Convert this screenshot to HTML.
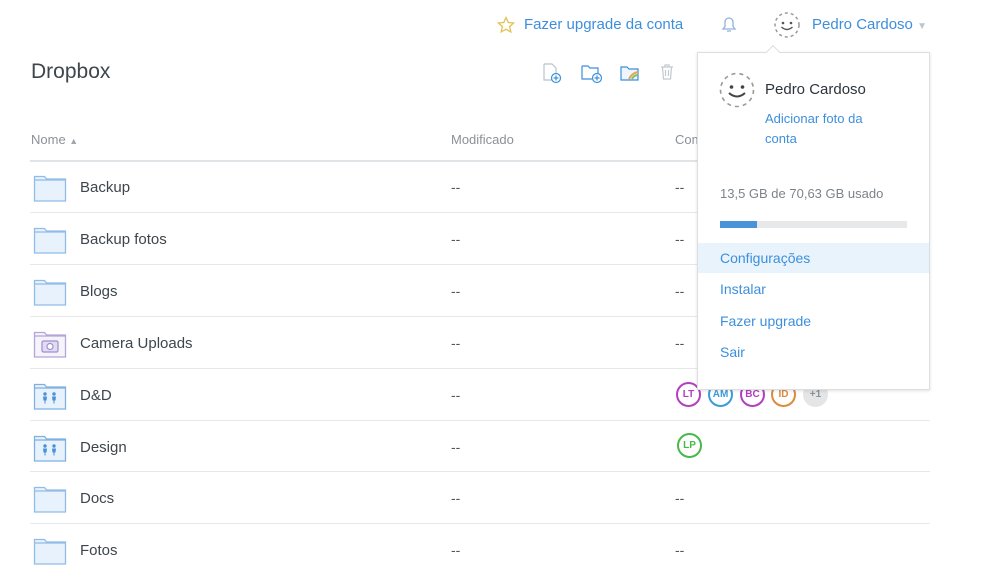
<!DOCTYPE html>
<html><head><meta charset="utf-8"><style>
*{margin:0;padding:0;box-sizing:border-box}
body{width:984px;height:572px;overflow:hidden;background:#fff;font-family:"Liberation Sans","DejaVu Sans",sans-serif;color:#3d464d;position:relative}
.a{position:absolute}
.blue{color:#3d8fdc}
.row{position:absolute;left:30px;width:900px;height:52px;border-top:1px solid #e6e8ea}
.row .ic{position:absolute;left:3px;top:10px}
.row .nm{position:absolute;left:50px;top:18px;font-size:15px;color:#3d464d}
.row .d1{position:absolute;left:421px;top:18px;font-size:14px;color:#4f575d}
.row .d2{position:absolute;left:645px;top:18px;font-size:14px;color:#4f575d}
.av{position:absolute;width:25px;height:25px;border:2px solid;border-radius:50%;font-size:10px;font-weight:bold;text-align:center;line-height:21px;background:#fff}
.menu{position:absolute;left:697px;top:52px;width:233px;height:338px;background:#fff;border:1px solid #dcdfe2;box-shadow:0 1px 3px rgba(0,0,0,.12)}
.mi{position:absolute;left:0;width:231px;height:30px;padding-left:22px;line-height:30px;font-size:14px;color:#3d8fdc}
</style></head><body>
<svg class="a" style="left:497px;top:16px" width="18" height="18" viewBox="0 0 18 18"><path d="M9 1.5l2.3 5 5.3.5-4 3.6 1.2 5.3L9 13.2 4.2 15.9l1.2-5.3-4-3.6 5.3-.5z" fill="none" stroke="#e1c24f" stroke-width="1.3"/></svg>
<div class="a blue" style="left:524px;top:16px;font-size:15px">Fazer upgrade da conta</div>
<svg class="a" style="left:719px;top:14px" width="20" height="20" viewBox="0 0 20 20"><path d="M4 15h12l-2-2.5V8a4 4 0 0 0-8 0v4.5z M8 17h4" fill="none" stroke="#8fb4d9" stroke-width="1.3"/></svg>
<svg class="a" style="left:773px;top:11px" width="28" height="28" viewBox="0 0 28 28"><circle cx="14" cy="14" r="12" fill="none" stroke="#999" stroke-width="1.5" stroke-dasharray="3 3"/><circle cx="10" cy="12" r="1.3" fill="#555"/><circle cx="18" cy="12" r="1.3" fill="#555"/><path d="M8.5 16q5.5 5 11 0" fill="none" stroke="#555" stroke-width="1.5"/></svg>
<div class="a blue" style="left:812px;top:16px;font-size:15px">Pedro Cardoso <span style="color:#b9c6d3;font-size:10px">▼</span></div>
<div class="a" style="left:31px;top:60px;font-size:21px;color:#3d464d">Dropbox</div>
<svg class="a" style="left:541px;top:62px" width="22" height="22" viewBox="0 0 22 22"><path d="M3 2h8l4 4v5M3 2v16h8" fill="none" stroke="#b8c4ce" stroke-width="1.2"/><circle cx="15" cy="16" r="4.5" fill="#fff" stroke="#3d8fdc" stroke-width="1.2"/><path d="M15 13.5v5M12.5 16h5" stroke="#3d8fdc" stroke-width="1.2"/></svg>
<svg class="a" style="left:580px;top:62px" width="24" height="22" viewBox="0 0 24 22"><path d="M2 4h6l2 2h8v5M2 4v13h10" fill="none" stroke="#3d8fdc" stroke-width="1.2"/><circle cx="17" cy="16" r="4.5" fill="#fff" stroke="#3d8fdc" stroke-width="1.2"/><path d="M17 13.5v5M14.5 16h5" stroke="#3d8fdc" stroke-width="1.2"/></svg>
<svg class="a" style="left:619px;top:62px" width="22" height="22" viewBox="0 0 22 22"><path d="M2 5h6l2 2h9v11H2z" fill="#eef5fc" stroke="#3d8fdc" stroke-width="1.2"/><path d="M10 17q3-6 9-7" fill="none" stroke="#e6a44a" stroke-width="2"/><path d="M13 17q2-4 6-4" fill="none" stroke="#7cc26a" stroke-width="2"/></svg>
<svg class="a" style="left:659px;top:63px" width="16" height="18" viewBox="0 0 16 18"><path d="M2 4h12M6 4V2h4v2M3.5 4l1 12h7l1-12M6.5 7v6M9.5 7v6" fill="none" stroke="#c2c9cf" stroke-width="1.2"/></svg>
<div class="a" style="left:31px;top:132px;font-size:13px;color:#8a9299">Nome <span style="font-size:9px;color:#a0a8ae">▲</span></div>
<div class="a" style="left:451px;top:132px;font-size:13px;color:#8a9299">Modificado</div>
<div class="a" style="left:675px;top:132px;font-size:13px;color:#8a9299">Compartilhado</div>
<div class="a" style="left:30px;top:160px;width:900px;height:2px;background:#e1e4e7"></div>
<div class="row" style="top:161px;border-top:0"><svg class="ic" width="34" height="32" viewBox="0 0 34 32"><path d="M1.5 5.5h10l2 2.5h19v22h-31z" fill="#e8f2fc" stroke="#90bce6" stroke-width="1.3"/><path d="M1.5 9h31" stroke="#90bce6" stroke-width="1.3"/></svg><div class="nm">Backup</div><div class="d1">--</div><div class="d2">--</div></div>
<div class="row" style="top:212px"><svg class="ic" width="34" height="32" viewBox="0 0 34 32"><path d="M1.5 5.5h10l2 2.5h19v22h-31z" fill="#e8f2fc" stroke="#90bce6" stroke-width="1.3"/><path d="M1.5 9h31" stroke="#90bce6" stroke-width="1.3"/></svg><div class="nm">Backup fotos</div><div class="d1">--</div><div class="d2">--</div></div>
<div class="row" style="top:264px"><svg class="ic" width="34" height="32" viewBox="0 0 34 32"><path d="M1.5 5.5h10l2 2.5h19v22h-31z" fill="#e8f2fc" stroke="#90bce6" stroke-width="1.3"/><path d="M1.5 9h31" stroke="#90bce6" stroke-width="1.3"/></svg><div class="nm">Blogs</div><div class="d1">--</div><div class="d2">--</div></div>
<div class="row" style="top:316px"><svg class="ic" width="34" height="32" viewBox="0 0 34 32"><path d="M1.5 5.5h10l2 2.5h19v22h-31z" fill="#f6f3fb" stroke="#b3a6d6" stroke-width="1.3"/><path d="M1.5 9h31" stroke="#b3a6d6" stroke-width="1.3"/><rect x="9" y="14" width="16" height="11" rx="1.5" fill="#e2dbf2" stroke="#9f8fcf" stroke-width="1.2"/><circle cx="17" cy="19.5" r="3" fill="#fff" stroke="#9f8fcf" stroke-width="1.2"/></svg><div class="nm">Camera Uploads</div><div class="d1">--</div><div class="d2">--</div></div>
<div class="row" style="top:368px"><svg class="ic" width="34" height="32" viewBox="0 0 34 32"><path d="M1.5 5.5h10l2 2.5h19v22h-31z" fill="#e8f2fc" stroke="#7fb0e0" stroke-width="1.3"/><path d="M1.5 9h31" stroke="#7fb0e0" stroke-width="1.3"/><g fill="#4a90d9"><circle cx="12" cy="15" r="1.7"/><path d="M10 17.5h4l-.5 4h-1v3h-1v-3h-1z"/><circle cx="21" cy="15" r="1.7"/><path d="M19 17.5h4l-.5 4h-1v3h-1v-3h-1z"/></g></svg><div class="nm">D&amp;D</div><div class="d1">--</div></div>
<div class="row" style="top:420px"><svg class="ic" width="34" height="32" viewBox="0 0 34 32"><path d="M1.5 5.5h10l2 2.5h19v22h-31z" fill="#e8f2fc" stroke="#7fb0e0" stroke-width="1.3"/><path d="M1.5 9h31" stroke="#7fb0e0" stroke-width="1.3"/><g fill="#4a90d9"><circle cx="12" cy="15" r="1.7"/><path d="M10 17.5h4l-.5 4h-1v3h-1v-3h-1z"/><circle cx="21" cy="15" r="1.7"/><path d="M19 17.5h4l-.5 4h-1v3h-1v-3h-1z"/></g></svg><div class="nm">Design</div><div class="d1">--</div></div>
<div class="row" style="top:471px"><svg class="ic" width="34" height="32" viewBox="0 0 34 32"><path d="M1.5 5.5h10l2 2.5h19v22h-31z" fill="#e8f2fc" stroke="#90bce6" stroke-width="1.3"/><path d="M1.5 9h31" stroke="#90bce6" stroke-width="1.3"/></svg><div class="nm">Docs</div><div class="d1">--</div><div class="d2">--</div></div>
<div class="row" style="top:523px"><svg class="ic" width="34" height="32" viewBox="0 0 34 32"><path d="M1.5 5.5h10l2 2.5h19v22h-31z" fill="#e8f2fc" stroke="#90bce6" stroke-width="1.3"/><path d="M1.5 9h31" stroke="#90bce6" stroke-width="1.3"/></svg><div class="nm">Fotos</div><div class="d1">--</div><div class="d2">--</div></div>
<div class="av" style="left:676px;top:382px;border-color:#b43fc0;color:#b43fc0">LT</div>
<div class="av" style="left:708px;top:382px;border-color:#3c9bd8;color:#3c9bd8">AM</div>
<div class="av" style="left:740px;top:382px;border-color:#b43fc0;color:#b43fc0">BC</div>
<div class="av" style="left:771px;top:382px;border-color:#dc8a3e;color:#dc8a3e">ID</div>
<div class="av" style="left:803px;top:382px;border-color:#e3e5e7;background:#e3e5e7;color:#8a9299">+1</div>
<div class="av" style="left:677px;top:433px;border-color:#48b84a;color:#48b84a">LP</div>
<div class="menu">
<div class="a" style="left:70px;top:-6px;width:10px;height:10px;background:#fff;border-left:1px solid #dcdfe2;border-top:1px solid #dcdfe2;transform:rotate(45deg)"></div>
<svg class="a" style="left:20px;top:18px" width="38" height="38" viewBox="0 0 38 38"><circle cx="19" cy="19" r="16.5" fill="none" stroke="#999" stroke-width="1.6" stroke-dasharray="4 4"/><circle cx="13.5" cy="16" r="1.8" fill="#444"/><circle cx="24.5" cy="16" r="1.8" fill="#444"/><path d="M11 22q8 7 16 0" fill="none" stroke="#444" stroke-width="2"/></svg>
<div class="a" style="left:67px;top:28px;font-size:15px;color:#2d343a">Pedro Cardoso</div>
<div class="a blue" style="left:67px;top:56px;font-size:13px;line-height:20px">Adicionar foto da<br>conta</div>
<div class="a" style="left:22px;top:133px;font-size:13px;color:#7b848b">13,5 GB de 70,63 GB usado</div>
<div class="a" style="left:22px;top:168px;width:187px;height:7px;background:#e6e8ea"><div style="width:37px;height:7px;background:#4b93d9"></div></div>
<div class="mi" style="top:190px;background:#e9f3fc">Configurações</div>
<div class="mi" style="top:221px">Instalar</div>
<div class="mi" style="top:253px">Fazer upgrade</div>
<div class="mi" style="top:284px">Sair</div>
</div>
</body></html>
